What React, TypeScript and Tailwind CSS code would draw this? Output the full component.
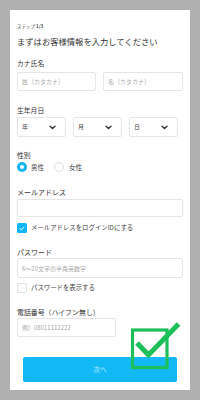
import React from "react";

function Chevron() {
  return (
    <svg width="7" height="5" viewBox="0 0 7 5" className="shrink-0">
      <path d="M1 1.2 L3.5 3.6 L6 1.2" fill="none" stroke="#333" strokeWidth="1.4" strokeLinecap="round" strokeLinejoin="round" />
    </svg>
  );
}

function Select({ label, w }: { label: string; w: string }) {
  return (
    <div className={`${w} h-[20px] border border-[#e6e6e6] rounded-[2px] bg-white flex items-center justify-between pl-[4px] pr-[9px]`}>
      <span className="text-[6px] leading-none text-[#444]">{label}</span>
      <Chevron />
    </div>
  );
}

export default function App() {
  return (
    <div className="relative w-[200px] h-[400px] bg-[#b0b0b0] pt-[10px] px-[10px] font-['Noto_Sans_CJK_JP','Noto_Sans',sans-serif] overflow-hidden">
      <div className="w-[180px] h-[380px] bg-white px-[7px] flex flex-col">
        <div className="mt-[12px] h-[8px] leading-[8px] text-[4.5px] text-[#444]">
          ステップ <span className="font-bold">1/3</span>
        </div>
        <div className="mt-[5px] h-[12px] leading-[12px] text-[8.3px] text-[#333] whitespace-nowrap">
          まずはお客様情報を入力してください
        </div>

        <div className="mt-[11px] h-[10px] leading-[10px] text-[6.8px] text-[#333]">カナ氏名</div>
        <div className="mt-[4px] flex gap-[7px]">
          <div className="w-[79px] h-[19px] border border-[#e6e6e6] rounded-[2px] flex items-center pl-[4px] text-[6px] text-[#aaa]">姓（カタカナ）</div>
          <div className="w-[80px] h-[19px] border border-[#e6e6e6] rounded-[2px] flex items-center pl-[4px] text-[6px] text-[#aaa]">名（カタカナ）</div>
        </div>

        <div className="mt-[14px] h-[10px] leading-[10px] text-[6.8px] text-[#333]">生年月日</div>
        <div className="mt-[2px] flex gap-[7px]">
          <Select label="年" w="w-[49px]" />
          <Select label="月" w="w-[49px]" />
          <Select label="日" w="w-[49px]" />
        </div>

        <div className="mt-[13px] h-[10px] leading-[10px] text-[6.8px] text-[#333]">性別</div>
        <div className="mt-[2px] flex items-center h-[10px]">
          <div className="w-[10px] h-[10px] rounded-full bg-[#12b6f2] flex items-center justify-center">
            <div className="w-[4px] h-[4px] rounded-full bg-white" />
          </div>
          <span className="ml-[4px] text-[6.5px] text-[#444] leading-none">男性</span>
          <div className="ml-[10px] w-[10px] h-[10px] rounded-full border border-[#e0e0e0] bg-white" />
          <span className="ml-[5px] text-[6.5px] text-[#444] leading-none">女性</span>
        </div>

        <div className="mt-[15px] h-[10px] leading-[10px] text-[7px] text-[#333]">メールアドレス</div>
        <div className="mt-[2px] h-[18px] w-[166px] border border-[#e6e6e6] rounded-[2px]" />

        <div className="mt-[6px] flex items-center h-[10px]">
          <div className="w-[10px] h-[10px] rounded-[1.5px] bg-[#12b6f2] flex items-center justify-center">
            <svg width="6" height="5" viewBox="0 0 6 5">
              <path d="M1 2.6 L2.4 3.9 L5 1.1" fill="none" stroke="white" strokeWidth="1" strokeLinecap="round" strokeLinejoin="round" />
            </svg>
          </div>
          <span className="ml-[4px] text-[6.4px] text-[#444] leading-none whitespace-nowrap">メールアドレスをログインIDにする</span>
        </div>

        <div className="mt-[14px] h-[10px] leading-[10px] text-[7px] text-[#333]">パスワード</div>
        <div className="mt-[1px] h-[20px] w-[166px] border border-[#e6e6e6] rounded-[2px] flex items-center pl-[4px] text-[6px] text-[#aaa]">
          6〜20文字の半角英数字
        </div>

        <div className="mt-[5px] flex items-center h-[10px]">
          <div className="w-[10px] h-[10px] rounded-[1.5px] border border-[#e0e0e0] bg-white" />
          <span className="ml-[4px] text-[6.4px] text-[#444] leading-none whitespace-nowrap">パスワードを表示する</span>
        </div>

        <div className="mt-[14px] h-[10px] leading-[10px] text-[6.9px] text-[#333] whitespace-nowrap">電話番号（ハイフン無し）</div>
        <div className="mt-[1px] h-[19px] w-[99px] border border-[#e6e6e6] rounded-[2px] flex items-center pl-[4px] text-[6px] text-[#aaa]">
          例）08011112222
        </div>

        <div className="mt-[20px] mx-[6px] h-[25px] rounded-[2px] bg-[#12b9f5] flex items-center justify-center text-[6.5px] text-[#bfeeff]">
          次へ
        </div>
      </div>

      <svg className="absolute left-0 top-0 pointer-events-none" width="200" height="400" viewBox="0 0 200 400">
        <rect x="132.5" y="330" width="34.5" height="37.5" fill="none" stroke="#1dbf5a" strokeWidth="3.2" />
        <path d="M137 343 L148.5 355 L178.5 324" fill="none" stroke="#1dbf5a" strokeWidth="5" strokeLinejoin="miter" />
      </svg>
    </div>
  );
}
